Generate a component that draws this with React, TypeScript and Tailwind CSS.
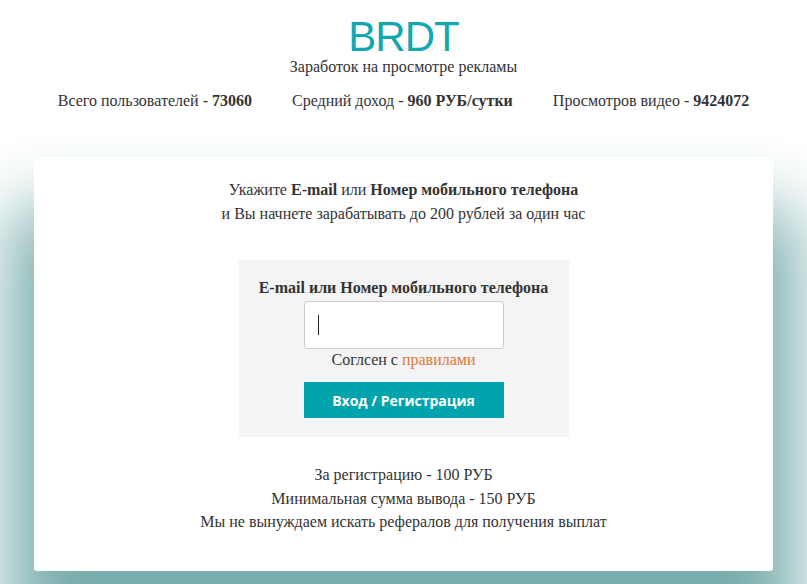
const stats = [
    { label: 'Всего пользователей - ', value: '73060' },
    { label: 'Средний доход - ', value: '960 РУБ/сутки' },
    { label: 'Просмотров видео - ', value: '9424072' },
];

const perks = ['За регистрацию - 100 РУБ', 'Минимальная сумма вывода - 150 РУБ', 'Мы не вынуждаем искать рефералов для получения выплат'];

export default function App() {
    return (
        <div className="relative min-h-screen overflow-hidden bg-white font-['Liberation_Serif',serif] text-[16px] text-[#333]">
            {/* Header */}
            <header className="pt-[15px] text-center">
                <h1 className="font-['Liberation_Sans',Arial,sans-serif] text-[42px] leading-[43px] font-normal tracking-[-1px] text-[#13a8b0]">
                    BRDT
                </h1>
                <p className="leading-[18px]">Заработок на просмотре рекламы</p>
                <div className="mt-[15px] flex justify-center gap-[40px] leading-[20px]">
                    {stats.map((s) => (
                        <span key={s.value}>
                            {s.label}
                            <b>{s.value}</b>
                        </span>
                    ))}
                </div>
            </header>

            {/* Card */}
            <main className="mx-[34px] mt-[47px] rounded-[3px] bg-white px-4 pt-[20px] pb-[37px] text-center shadow-[0_75px_70px_25px_rgba(122,173,173,1)]">
                <p className="leading-[24px]">
                    Укажите <b>E-mail</b> или <b>Номер мобильного телефона</b>
                </p>
                <p className="leading-[24px]">и Вы начнете зарабатывать до 200 рублей за один час</p>

                <div className="mx-auto mt-[34px] flex w-[330px] flex-col items-center bg-[#f4f4f4] pt-[18px] pb-[19px]">
                    <label className="leading-[20px] font-bold">E-mail или Номер мобильного телефона</label>
                    <div className="mt-[3px] flex h-[48px] w-[200px] items-center rounded-[3px] border border-[#cccccc] bg-white px-[13px]">
                        <span className="h-[20px] w-px bg-[#222]" />
                    </div>
                    <p className="mt-px leading-[20px]">
                        Соглсен с <a className="text-[#e3773a]">правилами</a>
                    </p>
                    <button
                        type="button"
                        className="mt-[12px] h-[36px] w-[200px] bg-[#00a4ac] font-['Open_Sans',sans-serif] text-[14px] font-bold text-white"
                    >
                        Вход / Регистрация
                    </button>
                </div>

                <div className="mt-[26px] leading-[23.5px]">
                    {perks.map((p) => (
                        <p key={p}>{p}</p>
                    ))}
                </div>
            </main>
        </div>
    );
}
